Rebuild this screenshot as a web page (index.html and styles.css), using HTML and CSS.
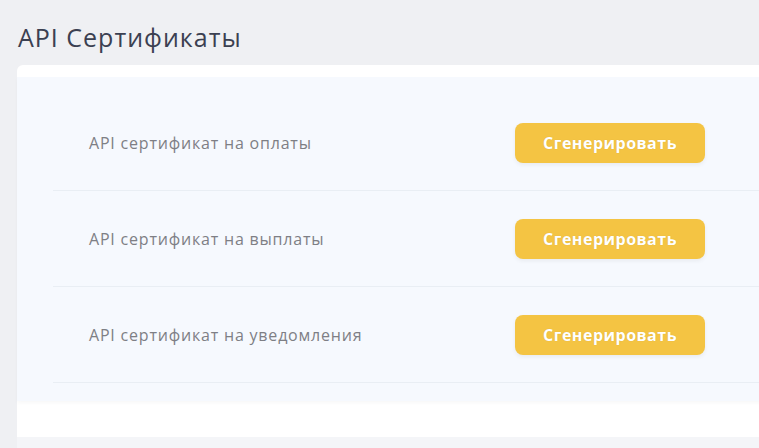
FILE: index.html
```html
<!DOCTYPE html>
<html lang="ru">
<head>
<meta charset="utf-8">
<title>API Сертификаты</title>
<link rel="stylesheet" href="styles.css">
</head>
<body>
<main class="page">
  <h1 class="page-title">API Сертификаты</h1>
  <section class="card">
    <div class="panel">
      <div class="row">
        <span class="label">API сертификат на оплаты</span>
        <button class="btn" type="button">Сгенерировать</button>
      </div>
      <div class="row">
        <span class="label">API сертификат на выплаты</span>
        <button class="btn" type="button">Сгенерировать</button>
      </div>
      <div class="row">
        <span class="label">API сертификат на уведомления</span>
        <button class="btn" type="button">Сгенерировать</button>
      </div>
    </div>
    <div class="card-foot"></div>
  </section>
  <div class="next-band"></div>
</main>
</body>
</html>
```
FILE: styles.css
```css
html, body {
  margin: 0;
  padding: 0;
  background: #eff0f3;
  overflow: hidden;
  height: 448px;
}
.page {
  padding-left: 17px;
  width: 1000px;
}
.page-title {
  margin: 0 0 13px;
  padding: 22px 0 0 1px;
  font-family: "Open Sans", sans-serif;
  font-weight: 400;
  font-size: 25px;
  letter-spacing: 1px;
  line-height: 30px;
  color: #3b4051;
}
.card {
  background: #fff;
  border-radius: 6px 0 0 0;
  padding-top: 12px;
}
.panel {
  background: #f6f9fe;
  padding: 18px 0 18px 36px;
  box-shadow: 0 2px 4px rgba(0, 0, 0, 0.03);
}
.row {
  display: grid;
  grid-template-columns: 426px 190px;
  align-items: center;
  height: 96px;
  box-sizing: border-box;
  border-bottom: 1px solid #e9eef4;
  padding-left: 36px;
}
.label {
  font-family: "Open Sans", sans-serif;
  font-size: 16px;
  letter-spacing: 0.8px;
  color: #7e7f85;
}
.btn {
  height: 40px;
  border: 0;
  border-radius: 8px;
  background: #f4c443;
  color: #fff;
  font-family: "Open Sans", sans-serif;
  font-weight: 700;
  font-size: 16px;
  letter-spacing: 0.5px;
  text-shadow: 0 0 1px rgba(0, 0, 0, 0.15);
  box-shadow: 0 2px 4px rgba(0, 0, 0, 0.06);
  cursor: pointer;
}
.card-foot {
  height: 36px;
}
.next-band {
  height: 20px;
  background: #f4f5f8;
}
```
